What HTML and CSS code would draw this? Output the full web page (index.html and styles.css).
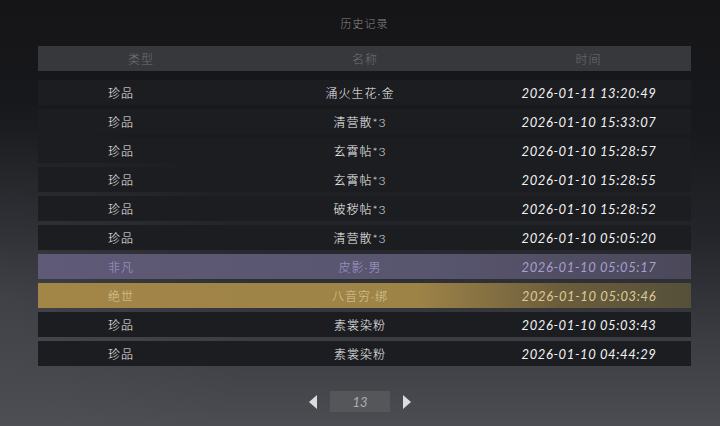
FILE: index.html
```html
<!DOCTYPE html>
<html lang="zh">
<head>
<meta charset="utf-8">
<link rel="stylesheet" href="styles.css">
</head>
<body>
<div class="screen">
  <div class="title">历史记录</div>
  <div class="table">
    <div class="head">
      <span>类型</span><span>名称</span><span>时间</span>
    </div>
    <div class="row"><span class="c1">珍品</span><span class="c2">涌火生花·金</span><span class="c3">2026-01-11 13:20:49</span></div>
    <div class="row"><span class="c1">珍品</span><span class="c2">清营散*3</span><span class="c3">2026-01-10 15:33:07</span></div>
    <div class="row"><span class="c1">珍品</span><span class="c2">玄霄帖*3</span><span class="c3">2026-01-10 15:28:57</span></div>
    <div class="row"><span class="c1">珍品</span><span class="c2">玄霄帖*3</span><span class="c3">2026-01-10 15:28:55</span></div>
    <div class="row"><span class="c1">珍品</span><span class="c2">破秽帖*3</span><span class="c3">2026-01-10 15:28:52</span></div>
    <div class="row"><span class="c1">珍品</span><span class="c2">清营散*3</span><span class="c3">2026-01-10 05:05:20</span></div>
    <div class="row purple"><span class="c1">非凡</span><span class="c2">皮影·男</span><span class="c3">2026-01-10 05:05:17</span></div>
    <div class="row gold"><span class="c1">绝世</span><span class="c2">八音穷·绑</span><span class="c3">2026-01-10 05:03:46</span></div>
    <div class="row"><span class="c1">珍品</span><span class="c2">素裳染粉</span><span class="c3">2026-01-10 05:03:43</span></div>
    <div class="row"><span class="c1">珍品</span><span class="c2">素裳染粉</span><span class="c3">2026-01-10 04:44:29</span></div>
  </div>
  <div class="pager">
    <span class="arrow left"></span>
    <span class="page">13</span>
    <span class="arrow right"></span>
  </div>
</div>
</body>
</html>
```
FILE: styles.css
```css
html, body {
  margin: 0;
  padding: 0;
}
body {
  width: 720px;
  height: 426px;
  overflow: hidden;
  font-family: "Noto Sans CJK SC", "Noto Sans", sans-serif;
}
.screen {
  width: 720px;
  height: 426px;
  box-sizing: border-box;
  padding: 0 29px 0 38px;
  display: flex;
  flex-direction: column;
  background:
    radial-gradient(ellipse 260px 200px at 0px 300px, rgba(90,92,98,0.35), rgba(90,92,98,0) 100%),
    linear-gradient(to bottom, #151518 0%, #18191c 30%, #24252a 55%, #3c3d42 80%, #4c4d52 100%);
}
.title {
  height: 46px;
  display: flex;
  align-items: center;
  justify-content: center;
  font-size: 11px;
  font-weight: 300;
  letter-spacing: 1px;
  color: #8a8a8c;
  padding-bottom: 1px;
  box-sizing: border-box;
}
.table {
  display: flex;
  flex-direction: column;
  gap: 4px;
}
.head {
  height: 25px;
  display: grid;
  grid-template-columns: 206px 242px 1fr;
  align-items: center;
  background: #37383c;
  color: #6f7073;
  font-size: 12px;
  font-weight: 300;
  letter-spacing: 1px;
  margin-bottom: 5px;
  text-align: center;
}
.row {
  height: 25px;
  display: grid;
  grid-template-columns: 166px 312px 146px 1fr;
  align-items: center;
  text-align: center;
  background: #1c1d21;
  color: #f2f2f2;
  font-size: 12px;
  font-weight: 300;
}
.c1 {
  letter-spacing: 1px;
}
.c2 {
  font-family: "Lato", "Noto Sans CJK SC", sans-serif;
  letter-spacing: 1px;
}
.c3 {
  font-family: "Lato", "Open Sans", sans-serif;
  font-style: italic;
  font-weight: 400;
  font-size: 13px;
  letter-spacing: 0.6px;
}
.row.purple {
  background: linear-gradient(to right, #5e5a77 0%, #58556f 60%, #4a4859 100%);
  color: #a89ecd;
}
.row.gold {
  background: linear-gradient(to right, #a28648 0%, #9e8347 58%, #6b5d3c 80%, #55503a 100%);
  color: #dccb9a;
}
.pager {
  margin-top: 25px;
  margin-right: -29px;
  margin-left: -38px;
  display: flex;
  justify-content: center;
  align-items: center;
  gap: 13px;
}
.page {
  width: 60px;
  height: 21px;
  background: #55565a;
  color: #aeaeb0;
  font-family: "Lato", sans-serif;
  font-style: italic;
  font-size: 13px;
  display: flex;
  align-items: center;
  justify-content: center;
}
.arrow {
  width: 0;
  height: 0;
  border-top: 7px solid transparent;
  border-bottom: 7px solid transparent;
}
.arrow.left {
  border-right: 8px solid #dcdcdc;
}
.arrow.right {
  border-left: 8px solid #dcdcdc;
}
```
